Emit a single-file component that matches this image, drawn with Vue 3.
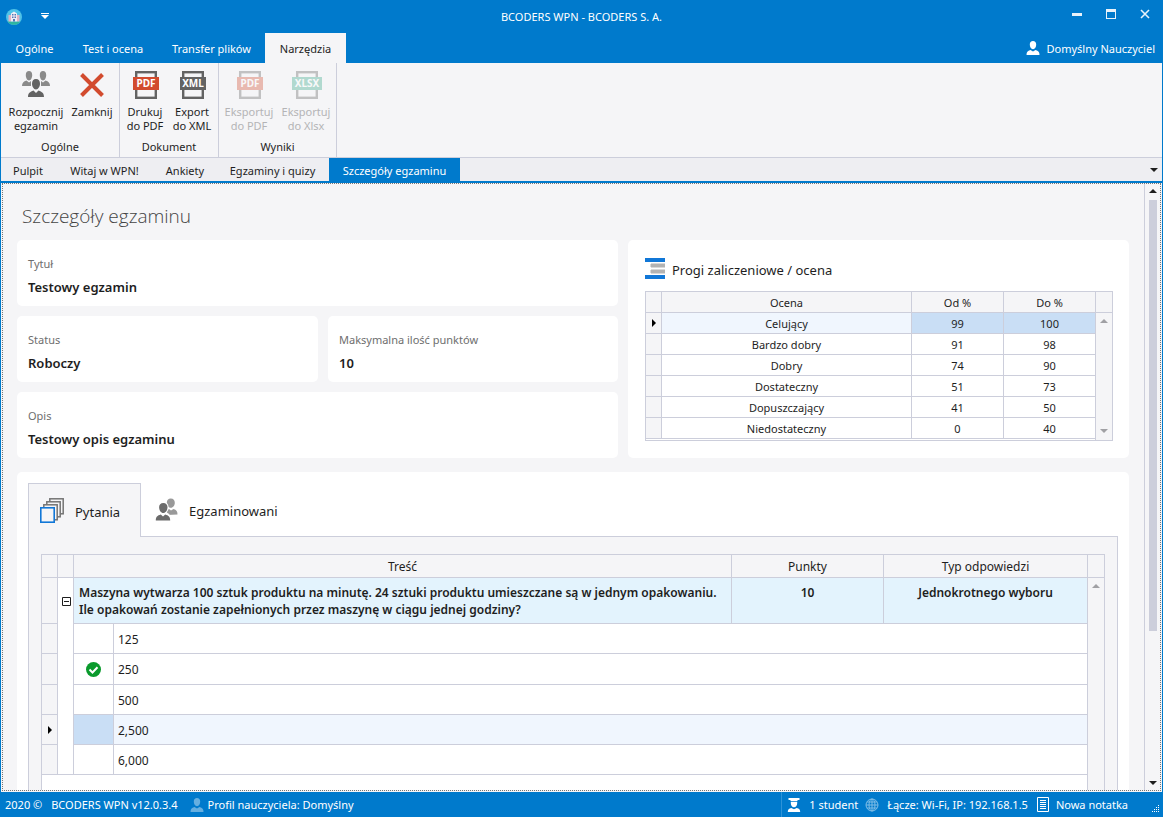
<script setup>
import { ref } from 'vue'

const ribbonTabs = ['Ogólne', 'Test i ocena', 'Transfer plików', 'Narzędzia']
const activeRibbonTab = ref('Narzędzia')

const documentTabs = ['Pulpit', 'Witaj w WPN!', 'Ankiety', 'Egzaminy i quizy', 'Szczegóły egzaminu']
const activeDocument = ref('Szczegóły egzaminu')

const fileCommands = [
  {
    caption: 'Dokument',
    kind: 'documents',
    items: [
      { top: 'Drukuj', bottom: 'do PDF', badge: 'PDF', tone: 'red', x: 2, w: 26, disabled: false },
      { top: 'Export', bottom: 'do XML', badge: 'XML', tone: 'dark', x: 2, w: 26, disabled: false }
    ]
  },
  {
    caption: 'Wyniki',
    kind: 'results',
    items: [
      { top: 'Eksportuj', bottom: 'do PDF', badge: 'PDF', tone: 'red', x: 2, w: 26, disabled: true },
      { top: 'Eksportuj', bottom: 'do Xlsx', badge: 'XLSX', tone: 'green', x: 0, w: 30, disabled: true }
    ]
  }
]

const grades = [
  { name: 'Celujący', from: 99, to: 100 },
  { name: 'Bardzo dobry', from: 91, to: 98 },
  { name: 'Dobry', from: 74, to: 90 },
  { name: 'Dostateczny', from: 51, to: 73 },
  { name: 'Dopuszczający', from: 41, to: 50 },
  { name: 'Niedostateczny', from: 0, to: 40 }
]
const selectedGrade = ref(0)

const answers = [
  { text: '125', correct: false },
  { text: '250', correct: true },
  { text: '500', correct: false },
  { text: '2,500', correct: false },
  { text: '6,000', correct: false }
]
const selectedAnswer = ref(3)
</script>

<template>
  <div class="window">
    <header class="titlebar">
      <div class="quick">
        <svg class="app-icon" viewBox="0 0 16 16" aria-hidden="true">
          <circle cx="8" cy="8" r="8" fill="#4fc3e8" />
          <path d="M1.500 12.500a8 8 0 0 0 13 0z" fill="#2fb5a0" />
          <path d="M2.500 6h2.500v6.500H2.500zM11 6h2.500v6.500H11z" fill="#e3b3c4" />
          <path d="M5 4.500l3-2 3 2v8H5z" fill="#f3eef4" />
          <path d="M6 5h1v1.500H6zM7.500 5h1v1.500h-1zM9 5h1v1.500H9zM6 7.500h1V9H6zM7.500 7.500h1V9h-1zM9 7.500h1V9H9zM7 10h2v2.500H7z" fill="#5577b5" />
        </svg>
        <button class="quick-menu" aria-label="Dostosuj pasek">
          <svg viewBox="0 0 8 7" aria-hidden="true"><path d="M0 0h8v1H0zM0 2h8L4 6z" fill="#fff" /></svg>
        </button>
      </div>
      <h1 class="window-title">BCODERS WPN - BCODERS S. A.</h1>
      <div class="window-buttons">
        <button aria-label="Minimalizuj">
          <svg viewBox="0 0 11 11" aria-hidden="true"><path d="M0 4h10v3H0z" fill="#e8f2fa" /></svg>
        </button>
        <button aria-label="Maksymalizuj">
          <svg viewBox="0 0 11 11" aria-hidden="true"><path d="M0 0h10v10H0zM1 3v6h8V3z" fill="#e8f2fa" fill-rule="evenodd" /></svg>
        </button>
        <button aria-label="Zamknij okno">
          <svg viewBox="0 0 11 11" aria-hidden="true"><path d="M1 1l8 8M9 1l-8 8" stroke="#e8f2fa" stroke-width="1.600" /></svg>
        </button>
      </div>
    </header>

    <div class="ribbon-bar">
      <nav class="ribbon-tabs">
        <button
          v-for="tab in ribbonTabs"
          :key="tab"
          :class="{ active: tab === activeRibbonTab }"
          @click="activeRibbonTab = tab"
        >{{ tab }}</button>
      </nav>
      <div class="user">
        <svg viewBox="0 0 14 14" aria-hidden="true">
          <path d="M7 0c2 0 3.200 1.400 3.200 3.600C10.200 6 9 8.200 7 8.200S3.800 6 3.800 3.600C3.800 1.400 5 0 7 0zM.5 14c0-3 1-4 4-5L7 10.500 9.500 9c3 1 4 2 4 5z" fill="#fff" />
        </svg>
        <span>Domyślny Nauczyciel</span>
      </div>
    </div>

    <section class="ribbon">
      <div class="group general">
        <div class="commands">
          <button class="command">
            <svg viewBox="0 0 28 28" aria-hidden="true">
              <g fill="#8a8a8a">
                <path d="M7 0c2 0 3.200 1.500 3.200 4S9 9.500 7 9.500 3.800 6.500 3.800 4 5 0 7 0zM0 15c0-3 1.500-4.500 4.500-5.500L7 11.500 9 10v5z" />
                <path d="M21 0c2 0 3.200 1.500 3.200 4S23 9.500 21 9.500 17.800 6.500 17.800 4 19 0 21 0zM28 15c0-3-1.500-4.500-4.500-5.500L21 11.500 19 10v5z" />
              </g>
              <path d="M14 7c3 0 5 2.200 5 5.600 0 3-1.600 5.400-3.500 6.400 5 1.500 7.500 3 7.500 7.500H5C5 22 7.500 20.500 12.500 19 10.600 18 9 15.600 9 12.600 9 9.200 11 7 14 7z" fill="#f5f5f7" />
              <path d="M14 8c2.600 0 4 1.900 4 4.800 0 2.700-1.700 5.700-4 5.700s-4-3-4-5.700C10 9.900 11.400 8 14 8zM6 26c0-4 2-5 5.500-6.500L14 22l2.500-2.500C20 21 22 22 22 26z" fill="#636363" />
            </svg>
            <span>Rozpocznij<br />egzamin</span>
          </button>
          <button class="command">
            <svg viewBox="0 0 28 28" aria-hidden="true"><path d="M3.500 3.500l21 21M24.500 3.500l-21 21" stroke="#d24b2e" stroke-width="4" /></svg>
            <span>Zamknij</span>
          </button>
        </div>
        <div class="caption">Ogólne</div>
      </div>
      <div v-for="group in fileCommands" :key="group.caption" class="group" :class="group.kind">
        <div class="commands">
          <button
            v-for="item in group.items"
            :key="item.badge"
            class="command"
            :class="item.tone"
            :disabled="item.disabled"
          >
            <svg viewBox="0 0 28 28" aria-hidden="true">
              <rect x="5.200" y="1.200" width="19.600" height="25.600" fill="none" stroke="#636363" stroke-width="2.400" />
              <rect class="badge" :x="item.x" y="6" :width="item.w" height="13" />
              <text class="badge-text" x="15" y="16">{{ item.badge }}</text>
            </svg>
            <span>{{ item.top }}<br />{{ item.bottom }}</span>
          </button>
        </div>
        <div class="caption">{{ group.caption }}</div>
      </div>
    </section>

    <nav class="document-bar">
      <div class="document-tabs">
        <button
          v-for="tab in documentTabs"
          :key="tab"
          :class="{ active: tab === activeDocument }"
          @click="activeDocument = tab"
        >{{ tab }}</button>
      </div>
      <button class="more" aria-label="Lista dokumentów">
        <svg viewBox="0 0 8 4" aria-hidden="true"><path d="M0 0h8L4 4z" fill="#1e1e1e" /></svg>
      </button>
    </nav>

    <main class="workspace">
      <div class="viewport">
        <div class="page">
          <h2>Szczegóły egzaminu</h2>
          <div class="overview">
            <dl class="fields">
              <div class="card field wide"><dt>Tytuł</dt><dd>Testowy egzamin</dd></div>
              <div class="card field"><dt>Status</dt><dd>Roboczy</dd></div>
              <div class="card field"><dt>Maksymalna ilość punktów</dt><dd>10</dd></div>
              <div class="card field wide"><dt>Opis</dt><dd>Testowy opis egzaminu</dd></div>
            </dl>

            <section class="card thresholds">
              <h3>
                <svg viewBox="0 0 20 21" aria-hidden="true">
                  <path d="M0 0h20v4H0zM0 17h20v4H0z" fill="#1177d7" />
                  <path d="M6 6h14v3H6zM6 12h14v3H6z" fill="#b3b3b3" stroke="#b3b3b3" />
                </svg>
                <span>Progi zaliczeniowe / ocena</span>
              </h3>
              <table class="grid">
                <colgroup><col class="c-mark" /><col /><col class="c-limit" /><col class="c-limit" /><col class="c-scroll" /></colgroup>
                <thead>
                  <tr><th></th><th>Ocena</th><th>Od %</th><th>Do %</th><th></th></tr>
                </thead>
                <tbody>
                  <tr
                    v-for="(grade, i) in grades"
                    :key="grade.name"
                    :class="{ selected: i === selectedGrade }"
                    @click="selectedGrade = i"
                  >
                    <td class="mark"><svg v-if="i === selectedGrade" viewBox="0 0 4 8" aria-hidden="true"><path d="M0 0l4 4-4 4z" /></svg></td>
                    <td>{{ grade.name }}</td>
                    <td class="limit">{{ grade.from }}</td>
                    <td class="limit">{{ grade.to }}</td>
                    <td v-if="i === 0" class="scroll" :rowspan="grades.length + 1">
                      <div class="arrows">
                        <svg viewBox="0 0 8 4" aria-hidden="true"><path d="M0 4h8L4 0z" /></svg>
                        <svg viewBox="0 0 8 4" aria-hidden="true"><path d="M0 0h8L4 4z" /></svg>
                      </div>
                    </td>
                  </tr>
                  <tr class="rest"><td colspan="4"></td></tr>
                </tbody>
              </table>
            </section>
          </div>

          <section class="card details">
            <div class="detail-tabs">
              <button class="active">
                <svg viewBox="0 0 24 25" aria-hidden="true">
                  <g fill="#f5f5f7" stroke="#747474" stroke-width="1.500">
                    <rect x="9.800" y=".8" width="13.400" height="15" />
                    <rect x="6.800" y="3.800" width="13.400" height="15" />
                    <rect x="3.800" y="6.800" width="13.400" height="15" />
                  </g>
                  <rect x=".8" y="9.800" width="13.400" height="14.400" fill="#f5f5f7" stroke="#1177d7" stroke-width="1.600" />
                </svg>
                <span>Pytania</span>
              </button>
              <button>
                <svg viewBox="0 0 24 25" aria-hidden="true">
                  <path d="M15.800 1.500c2.600 0 4 1.700 4 4.300 0 2.500-1.500 5-4 5s-4-2.500-4-5c0-2.600 1.400-4.300 4-4.300zM12 18c0-4 .5-5 2-6l2 1.500 2.500-1.500c3 1 4 2.500 4 5.500z" fill="#999" />
                  <path d="M8.500 5c3.300 0 5 2 5 5.200 0 2-1 4-2 5.300 3 1 4.500 3 4.500 8.500H0c0-5.500 2-7.500 5.500-8.500-1.200-1.300-2-3.300-2-5.300C3.500 7 5.200 5 8.500 5z" fill="#fff" />
                  <path d="M8.300 6c2.700 0 4.200 1.700 4.200 4.300 0 2.700-1.700 5.700-4.200 5.700s-4.200-3-4.200-5.700C4.100 7.700 5.600 6 8.300 6zM.8 23.500c0-3.500 1.500-5 5-6l2.200 2 2.200-2c3.500 1 5 2.500 5 6z" fill="#6b6b6b" />
                </svg>
                <span>Egzaminowani</span>
              </button>
              <div class="tab-rule"></div>
            </div>
            <div class="detail-page">
              <table class="grid questions">
                <colgroup>
                  <col class="c-mark" /><col class="c-mark" /><col class="c-state" /><col />
                  <col class="c-points" /><col class="c-type" /><col class="c-scroll" />
                </colgroup>
                <thead>
                  <tr><th></th><th></th><th colspan="2">Treść</th><th>Punkty</th><th>Typ odpowiedzi</th><th></th></tr>
                </thead>
                <tbody>
                  <tr class="question">
                    <td class="mark"></td>
                    <td class="toggle" :rowspan="answers.length + 1">
                      <button aria-label="Zwiń odpowiedzi">
                        <svg viewBox="0 0 9 9" aria-hidden="true"><path d="M.5.5h8v8h-8zM2 4.500h5" fill="#fff" stroke="#1e1e1e" /></svg>
                      </button>
                    </td>
                    <td class="content" colspan="2">
                      Maszyna wytwarza 100 sztuk produktu na minutę. 24 sztuki produktu umieszczane są w jednym opakowaniu.<br />
                      Ile opakowań zostanie zapełnionych przez maszynę w ciągu jednej godziny?
                    </td>
                    <td>10</td>
                    <td>Jednokrotnego wyboru</td>
                    <td class="scroll" :rowspan="answers.length + 2">
                      <div class="arrows"><svg viewBox="0 0 8 4" aria-hidden="true"><path d="M0 4h8L4 0z" /></svg></div>
                    </td>
                  </tr>
                  <tr
                    v-for="(answer, i) in answers"
                    :key="answer.text"
                    class="answer"
                    :class="{ selected: i === selectedAnswer, correct: answer.correct }"
                    @click="selectedAnswer = i"
                  >
                    <td class="mark"><svg v-if="i === selectedAnswer" viewBox="0 0 4 8" aria-hidden="true"><path d="M0 0l4 4-4 4z" /></svg></td>
                    <td class="state">
                      <svg v-if="answer.correct" viewBox="0 0 15 15" role="img" aria-label="Poprawna">
                        <circle cx="7.500" cy="7.500" r="7.500" fill="#0a9a2c" />
                        <path d="M3.500 7.500l3 3 5-5.200" fill="none" stroke="#fff" stroke-width="2" />
                      </svg>
                    </td>
                    <td class="text" colspan="3">{{ answer.text }}</td>
                  </tr>
                  <tr class="rest"><td colspan="6"></td></tr>
                </tbody>
              </table>
            </div>
          </section>
        </div>

        <div class="scrollbar" aria-hidden="true">
          <svg viewBox="0 0 8 4"><path d="M0 4h8L4 0z" /></svg>
          <div class="track"><div class="thumb"></div></div>
          <svg viewBox="0 0 8 4"><path d="M0 0h8L4 4z" /></svg>
        </div>
      </div>
    </main>

    <footer class="statusbar">
      <span>2020 ©</span>
      <span class="version">BCODERS WPN v12.0.3.4</span>
      <span class="item profile">
        <svg viewBox="0 0 14 14" aria-hidden="true">
          <path d="M7 0c2 0 3.200 1.400 3.200 3.600C10.200 6 9 8.200 7 8.200S3.800 6 3.800 3.600C3.800 1.400 5 0 7 0zM.5 14c0-3 1-4 4-5L7 10.500 9.500 9c3 1 4 2 4 5z" fill="#66afe0" />
        </svg>
        Profil nauczyciela: Domyślny
      </span>
      <span class="item students">
        <svg viewBox="0 0 14 14" aria-hidden="true">
          <path d="M1.500 0h11v2h-2v1h-7V2h-2zM3.800 3.800h6.400V5c0 2.400-1.200 4.200-3.200 4.200S3.800 7.400 3.800 5zM.8 14c0-2.500 1-3.500 3.500-4L7 11.200 9.700 10c2.500.5 3.500 1.500 3.500 4z" fill="#fff" />
        </svg>
        1 student
      </span>
      <span class="item network">
        <svg viewBox="0 0 14 14" aria-hidden="true">
          <g fill="none" stroke="#7fbde6">
            <circle cx="7" cy="7" r="6" />
            <ellipse cx="7" cy="7" rx="3" ry="6" />
            <path d="M7 1v12M1 7h12M2 4h10M2 10h10" />
          </g>
        </svg>
        Łącze: Wi-Fi, IP: 192.168.1.5
      </span>
      <span class="item note">
        <svg viewBox="0 0 12 15" aria-hidden="true">
          <path d="M.5.5h11v14H.5zM3 3.500h6M3 5.500h6M3 7.500h6M3 9.500h6M3 11.500h6" fill="none" stroke="#fff" />
        </svg>
        Nowa notatka
      </span>
      <svg class="grip" viewBox="0 0 8 8" aria-hidden="true">
        <path d="M6 0h1v1H6zM4 2h1v1H4zM6 2h1v1H6zM2 4h1v1H2zM4 4h1v1H4zM6 4h1v1H6zM0 6h1v1H0zM2 6h1v1H2zM4 6h1v1H4zM6 6h1v1H6z" fill="#fff" />
      </svg>
    </footer>
  </div>
</template>

<style>
html,
body {
  background: #007acc;
}
</style>

<style scoped>
.window {
  display: flex;
  flex-direction: column;
  height: 100vh;
  box-sizing: border-box;
  padding: 0 1px;
  background: #007acc;
  color: #1e1e1e;
  font: 400 11px/14px "Noto Sans", "Open Sans", sans-serif;
}
.window *,
.window *::before {
  box-sizing: border-box;
}
svg {
  display: block;
  flex: none;
}
button {
  margin: 0;
  padding: 0;
  border: 0;
  background: none;
  color: inherit;
  font: inherit;
}
h1, h2, h3, dl, dd {
  margin: 0;
  font-weight: 400;
}

/* title bar */
.titlebar {
  display: grid;
  grid-template-columns: 1fr auto 1fr;
  align-items: center;
  height: 33px;
  color: #fff;
}
.quick {
  display: flex;
  align-items: center;
  gap: 19px;
  padding-left: 5px;
}
.app-icon {
  width: 16px;
  height: 16px;
}
.quick-menu svg {
  width: 8px;
  height: 7px;
}
.window-title {
  font-size: 11px;
}
.window-buttons {
  display: flex;
  justify-content: flex-end;
  align-self: start;
}
.window-buttons button {
  display: grid;
  place-items: center;
  width: 34px;
  height: 29px;
}
.window-buttons svg {
  width: 11px;
  height: 11px;
}

/* ribbon */
.ribbon-bar {
  display: flex;
  justify-content: space-between;
  height: 30px;
  color: #fff;
}
.ribbon-tabs {
  display: grid;
  grid-template-columns: 67px 90px 107px 81px;
}
.ribbon-tabs button,
.document-tabs button {
  padding-top: 2px;
}
.ribbon-tabs .active {
  background: #f5f5f7;
  color: #1e1e1e;
}
.user {
  display: flex;
  align-items: center;
  gap: 6px;
  padding-right: 7px;
}
.user span {
  padding-top: 2px;
}
.user svg {
  width: 14px;
  height: 14px;
}
.ribbon {
  display: flex;
  height: 95px;
  border-bottom: 1px solid #cccedb;
  background: #f5f5f7;
}
.group {
  display: flex;
  flex-direction: column;
  justify-content: space-between;
  padding: 8px 0 3px;
  border-right: 1px solid #cccedb;
}
.general { width: 119px; }
.documents { width: 99px; }
.results { width: 118px; }
.commands {
  display: grid;
}
.general .commands { grid-template-columns: 70px 42px; }
.documents .commands { grid-template-columns: 50px 44px; }
.results .commands { grid-template-columns: 60px 54px; }
.command {
  display: flex;
  flex-direction: column;
  align-items: center;
  gap: 6px;
  line-height: 14px;
  white-space: nowrap;
}
.command svg {
  width: 28px;
  height: 28px;
  overflow: visible;
}
.command:disabled {
  color: #b4b4b6;
}
.command:disabled svg {
  opacity: .35;
}
.badge { fill: #636363; }
.red .badge { fill: #d24b2e; }
.green .badge { fill: #35a888; }
.badge-text {
  fill: #fff;
  font-size: 10px;
  font-weight: 700;
  text-anchor: middle;
}
.caption {
  text-align: center;
}

/* open documents */
.document-bar {
  display: flex;
  justify-content: space-between;
  height: 25px;
  flex: none;
  border-bottom: 2px solid #007acc;
  background: #eeeef2;
}
.document-tabs {
  display: grid;
  grid-template-columns: 54px 99px 62px 113px 131px;
}
.document-tabs .active {
  background: #007acc;
  color: #fff;
}
.more {
  padding-right: 4px;
}
.more svg {
  width: 8px;
  height: 4px;
}

/* page */
.workspace {
  display: flex;
  flex: 1;
  min-height: 0;
  padding: 0 1px 1px;
  background: #f5f5f7;
}
.viewport {
  display: flex;
  flex: 1;
  min-width: 0;
  border: 1px dotted #777;
}
.page {
  flex: 1;
  min-width: 0;
  padding: 18px 15px 0 14px;
  overflow: hidden;
}
h2 {
  padding: 0 5px 10px;
  font: 300 19px/28px "Open Sans", sans-serif;
  color: #444;
}
.card {
  border-radius: 5px;
  background: #fff;
}
.overview {
  display: grid;
  grid-template-columns: 601fr 501fr;
  gap: 10px;
  margin-bottom: 14px;
}
.fields {
  display: grid;
  grid-template-columns: 301fr 290fr;
  gap: 10px;
}
.wide {
  grid-column: 1 / -1;
}
.field {
  height: 66px;
  padding: 16px 11px 0;
}
dt {
  margin-bottom: 6px;
  line-height: 16px;
  color: #6e6e6e;
}
dd {
  font-size: 13px;
  font-weight: 600;
  line-height: 18px;
}
.thresholds {
  padding: 16px 16px 17px 17px;
}
h3 {
  display: flex;
  align-items: center;
  gap: 7px;
  height: 24px;
  margin-bottom: 11px;
  font-size: 13px;
}
h3 span {
  padding-top: 4px;
}
h3 svg {
  width: 20px;
  height: 21px;
}

/* data grids */
.grid {
  width: 100%;
  table-layout: fixed;
  border-collapse: separate;
  border-spacing: 0;
  border: 1px solid #cccedb;
  border-width: 1px 0 0 1px;
  background: #fff;
  text-align: center;
}
.grid th,
.grid td {
  height: 21px;
  padding: 2px 0 0;
  border: 1px solid #cccedb;
  border-width: 0 1px 1px 0;
}
.grid th {
  background: #f5f5f7;
  font-weight: 400;
}
.c-mark { width: 16px; }
.c-limit { width: 92px; }
.c-scroll { width: 17px; }
.c-state { width: 40px; }
.c-points { width: 152px; }
.c-type { width: 204px; }
.grid .mark,
.grid .scroll {
  padding: 0;
  background: #f5f5f7;
}
.mark svg {
  width: 4px;
  height: 8px;
  margin: 0 auto;
}
.grid .scroll {
  vertical-align: top;
}
.arrows {
  display: flex;
  flex-direction: column;
  justify-content: space-between;
  align-items: center;
  height: 125px;
  padding: 6px 0 5px;
}
.arrows svg {
  width: 8px;
  height: 4px;
  fill: #a0a0a4;
}
.selected td {
  background: #f0f6fe;
}
.selected .limit,
.selected .state {
  background: #c9def5;
}
.grid .rest td {
  height: 2px;
  padding: 0;
}

/* question details */
.details {
  padding: 11px;
}
.detail-tabs {
  display: flex;
  height: 54px;
}
.detail-tabs button {
  display: flex;
  align-items: center;
  gap: 10px;
  padding: 0 12px 0 14px;
  border-bottom: 1px solid #cccedb;
  font-size: 13px;
}
.detail-tabs .active {
  width: 113px;
  padding: 0 0 0 11px;
  gap: 11px;
  border: 1px solid #cccedb;
  border-bottom: 0;
  background: #f5f5f7;
}
.detail-tabs span {
  padding-top: 2px;
}
.detail-tabs svg {
  width: 24px;
  height: 25px;
}
.tab-rule {
  flex: 1;
  border-bottom: 1px solid #cccedb;
}
.detail-page {
  padding: 17px 12px;
  border: 1px solid #cccedb;
  border-top: 0;
  background: #f5f5f7;
}
.questions {
  font-size: 12px;
}
.grid.questions th {
  height: 23px;
}
.question td {
  height: 46px;
  background: #e3f3fd;
  font-weight: 600;
  line-height: 17px;
  vertical-align: top;
}
.grid .question td {
  padding-top: 6px;
}
.grid .question .content {
  padding-left: 5px;
  text-align: left;
  white-space: nowrap;
}
.grid .question .toggle {
  padding-top: 19px;
  background: #fff;
}
.toggle button {
  display: block;
  margin: 0 0 0 4px;
}
.toggle svg {
  width: 9px;
  height: 9px;
}
.grid .question .scroll {
  padding: 0;
}
.grid .answer td {
  height: 30px;
}
.grid .answer.correct td {
  height: 31px;
}
.grid .answer .state {
  padding: 0;
}
.state svg {
  width: 15px;
  height: 15px;
  margin: 0 auto;
}
.grid .answer .text {
  padding-left: 4px;
  text-align: left;
}
.grid.questions .rest td {
  height: 60px;
}

/* page scroll bar */
.scrollbar {
  display: flex;
  flex-direction: column;
  align-items: center;
  justify-content: space-between;
  width: 16px;
  padding: 5px 0 5px;
  border-left: 1px solid #cccedb;
}
.scrollbar svg {
  width: 8px;
  height: 4px;
  fill: #1e1e1e;
}
.track {
  flex: 1;
  width: 8px;
  margin: 7px 0;
}
.thumb {
  height: 75%;
  background: #cccedb;
}

/* status bar */
.statusbar {
  display: flex;
  align-items: center;
  flex: none;
  height: 25px;
  padding-left: 4px;
  color: #fff;
  white-space: nowrap;
}
.version {
  margin-left: 9px;
}
.item {
  display: flex;
  align-items: center;
  gap: 4px;
  margin-left: 12px;
}
.item svg {
  width: 14px;
  height: 14px;
}
.students {
  align-self: stretch;
  gap: 8px;
  margin-left: auto;
  padding-left: 5px;
  border-left: 1px solid #2e93d8;
}
.network {
  gap: 8px;
  margin-left: 7px;
}
.note {
  gap: 7px;
  margin-left: 9px;
}
.note svg {
  width: 12px;
  height: 15px;
}
.statusbar .grip {
  width: 8px;
  height: 8px;
  align-self: flex-end;
  margin: 0 2px 4px 24px;
}
</style>
